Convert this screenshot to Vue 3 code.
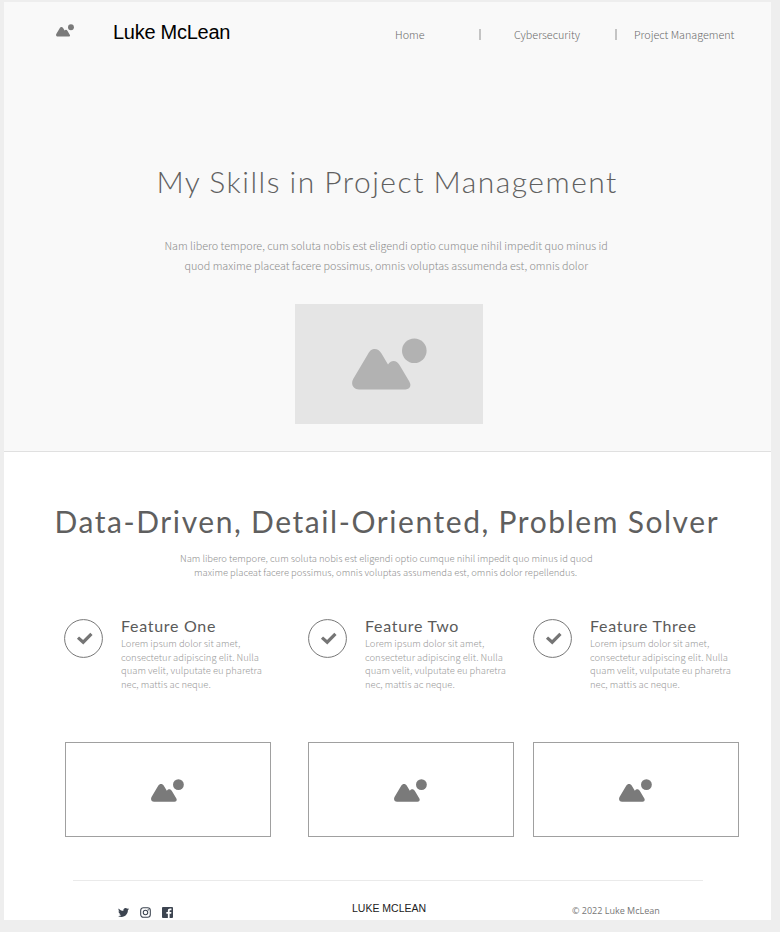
<script setup>
const navItems = [
  { label: 'Home', cls: 'home' },
  { label: 'Cybersecurity', cls: 'cyber' },
  { label: 'Project Management', cls: 'pm' },
]
const body = [
  'Lorem ipsum dolor sit amet,',
  'consectetur adipiscing elit. Nulla',
  'quam velit, vulputate eu pharetra',
  'nec, mattis ac neque.',
]
const features = ['Feature One', 'Feature Two', 'Feature Three']
</script>

<template>
  <div class="page">
    <svg width="0" height="0" class="defs" aria-hidden="true">
      <symbol id="mountains" viewBox="0 0 75 52">
        <path d="M1.2 41 L16 16 C18.5 11.800 20 11 22.700 11 C25.400 11 27.500 12.200 29.500 15.500 L36 26.500 C38 23.800 39.500 23 41.500 23 C44 23 45.700 24.200 47.500 27 L57.300 43.500 C60 48 57.500 51.500 53.500 51.500 H7 C1 51.500 -1.500 46 1.200 41 Z" />
        <circle cx="62.300" cy="12.700" r="12.300" />
      </symbol>
    </svg>

    <section class="hero">
      <header class="top">
        <svg class="logo"><use href="#mountains" /></svg>
        <div class="brand"><span>Luke McLean</span></div>
        <nav class="nav">
          <template v-for="(n, i) in navItems" :key="n.label">
            <i v-if="i" class="sep"></i>
            <a :class="n.cls">{{ n.label }}</a>
          </template>
        </nav>
      </header>
      <h1><span>My Skills in Project Management</span></h1>
      <p class="lead">
        <span class="l1">Nam libero tempore, cum soluta nobis est eligendi optio cumque nihil impedit quo minus id</span>
        <span class="l2">quod maxime placeat facere possimus, omnis voluptas assumenda est, omnis dolor</span>
      </p>
      <div class="picture">
        <svg><use href="#mountains" /></svg>
      </div>
    </section>

    <section class="skills">
      <h2><span>Data-Driven, Detail-Oriented, Problem Solver</span></h2>
      <p class="sub">
        <span class="l1">Nam libero tempore, cum soluta nobis est eligendi optio cumque nihil impedit quo minus id quod</span>
        <span class="l2">maxime placeat facere possimus, omnis voluptas assumenda est, omnis dolor repellendus.</span>
      </p>
      <div class="grid features">
        <article v-for="f in features" :key="f" class="feature">
          <svg class="check" viewBox="0 0 39 39">
            <circle cx="19.500" cy="19.500" r="18.900" fill="none" stroke="#777" stroke-width="1" />
            <path d="M15.200 19.700 L19.200 23.200 L26.300 16" fill="none" stroke="#757575" stroke-width="3.200" stroke-linecap="square" />
          </svg>
          <div class="copy">
            <h3><span>{{ f }}</span></h3>
            <p><span v-for="l in body" :key="l">{{ l }}</span></p>
          </div>
        </article>
      </div>
      <div class="grid cards">
        <div v-for="f in features" :key="f" class="card">
          <svg><use href="#mountains" /></svg>
        </div>
      </div>
    </section>

    <footer class="foot">
      <div class="social">
        <svg class="tw" viewBox="0 0 24 24"><path d="M23.950 4.570a10 10 0 0 1-2.820.77 4.960 4.960 0 0 0 2.160-2.720c-.95.550-2 .95-3.130 1.180a4.920 4.920 0 0 0-8.380 4.480C7.690 8.090 4.070 6.130 1.640 3.160a4.820 4.820 0 0 0-.67 2.470c0 1.710.87 3.210 2.190 4.100a4.900 4.900 0 0 1-2.230-.62v.06a4.920 4.920 0 0 0 3.950 4.830 5 5 0 0 1-2.210.08 4.940 4.940 0 0 0 4.600 3.420A9.870 9.870 0 0 1 0 19.540a14 14 0 0 0 7.550 2.210c9.050 0 14-7.500 14-13.980l-.02-.64a9.900 9.900 0 0 0 2.420-2.560z" /></svg>
        <svg class="ig" viewBox="0 0 24 24" fill="none" stroke="#3c4450" stroke-width="2.300"><rect x="1.500" y="1.500" width="21" height="21" rx="6" /><circle cx="12" cy="12" r="4.900" /><circle cx="18.200" cy="5.800" r=".5" /></svg>
        <svg class="fb" viewBox="0 0 24 24"><path d="M2 0H22Q24 0 24 2V22Q24 24 22 24H16.600V14.800H20L20.500 11H16.600V8.700C16.600 7.500 17 6.900 18.500 6.900H20.600V3.500L17.700 3.400C14.600 3.400 12.800 5.100 12.800 8.200V11H9.500V14.800H12.800V24H2Q0 24 0 22V2Q0 0 2 0Z" /></svg>
      </div>
      <div class="name"><span>LUKE MCLEAN</span></div>
      <div class="copyright"><span>© 2022 Luke McLean</span></div>
    </footer>
  </div>
</template>

<style>
body { background: #eee; }
</style>

<style scoped>
* { box-sizing: border-box; }
.page {
  width: 767px; height: 918px; margin: 2px 0 0 4px; background: #fff; overflow: hidden;
  white-space: nowrap;
  font-family: "Noto Sans CJK SC", "Noto Sans", sans-serif; font-weight: 300;
  display: flex; flex-direction: column;
}
.defs { display: block; position: absolute; }
h1, h2, h3, p { margin: 0; font-weight: inherit; }
svg { display: block; flex: none; }

.hero { height: 450px; flex: none; background: #f9f9f9; border-bottom: 1px solid #e0e0e0; }
.top { display: flex; height: 66px; }
.logo { width: 18px; height: 13px; margin: 22px 0 0 52px; fill: #7a7a7a; }
.brand { margin: 18px 0 0 39px; width: 282px; font: 400 20px/24px "Liberation Sans", sans-serif; letter-spacing: -.27px; color: #000; }
.nav { display: flex; font-size: 10.750px; line-height: 20px; color: #6c6c6c; padding-top: 23px; }
.nav .home { width: 84px; }
.nav .sep { width: 2px; height: 11px; margin-top: 4px; background: #c4c4c4; }
.nav .cyber { width: 101px; margin-left: 33px; }
.nav .pm { margin-left: 17px; }
h1 {
  margin-top: 93px; padding-left: 152.500px; font: 300 30px/40px Lato, sans-serif;
  letter-spacing: 1.500px; word-spacing: -1.100px; color: #606060;
}
.lead { display: flex; flex-direction: column; margin-top: 35px; font-size: 10.770px; line-height: 20px; color: #8c8c8c; }
.lead .l1 { padding-left: 160.500px; }
.lead .l2 { padding-left: 180.500px; }
.picture {
  display: flex; align-items: center; justify-content: center;
  width: 188px; height: 120px; margin: 28px 0 0 291px; background: #e5e5e5;
}
.picture svg { width: 75px; height: 52px; fill: #b2b2b2; }

.skills { flex: none; height: 428px; }
h2 {
  padding: 49px 0 0 50.500px; font: 400 30px/40px Lato, sans-serif;
  letter-spacing: 1.570px; word-spacing: -.6px; color: #5f5f5f;
}
.sub { display: flex; flex-direction: column; margin-top: 10px; font-size: 9.430px; line-height: 14px; color: #909090; }
.sub .l1 { padding-left: 176px; }
.sub .l2 { padding-left: 190px; }
.grid { display: grid; grid-template-columns: 243px 225px 206px; margin-left: 61px; }
.features { margin-top: 37px; margin-left: 60px; grid-template-columns: 244px 225px 206px; height: 84px; }
.feature { display: flex; gap: 18px; }
.check { width: 39px; height: 39px; margin-top: 2.500px; }
h3 { font: 400 16px/20px Lato, sans-serif; letter-spacing: .7px; color: #5a5a5a; }
.copy p { display: flex; flex-direction: column; padding-top: .95px; font-size: 9.430px; line-height: 13.600px; color: #999; }
.cards { margin-top: 42px; }
.card {
  display: flex; align-items: center; justify-content: center; padding: 1px 1px 0 0;
  width: 206px; height: 95px; border: 1px solid #a0a0a0;
}
.card svg { width: 33px; height: 23px; fill: #7a7a7a; }

.foot { display: flex; flex: none; width: 630px; height: 40px; margin-left: 69px; border-top: 1px solid #eaeaea; }
.social { display: flex; gap: 11px; margin: 26px 0 0 45px; width: 234px; fill: #3c4450; }
.social svg { width: 11px; height: 11px; }
.name { margin-top: 20px; width: 220px; font: 400 10.500px/14px "Liberation Sans", sans-serif; color: #222; }
.copyright { margin-top: 23px; font: 400 9px/14px "Open Sans", sans-serif; color: #777; }
</style>
